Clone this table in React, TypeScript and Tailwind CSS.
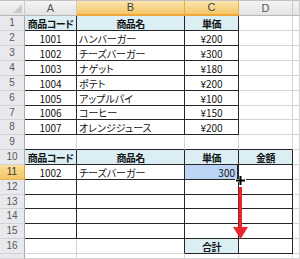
import React from "react";

type Cell = { t?: string; a?: "l" | "c" | "r"; b?: boolean; fill?: "h" | "s" };

const menu: [string, string, string][] = [
  ["1001", "ハンバーガー", "¥200"],
  ["1002", "チーズバーガー", "¥300"],
  ["1003", "ナゲット", "¥180"],
  ["1004", "ポテト", "¥200"],
  ["1005", "アップルパイ", "¥100"],
  ["1006", "コーヒー", "¥150"],
  ["1007", "オレンジジュース", "¥200"],
];

function rowCells(r: number): Cell[] {
  const empty: Cell[] = [{}, {}, {}, {}, {}];
  if (r === 1)
    return [
      { t: "商品コード", a: "c", b: true, fill: "h" },
      { t: "商品名", a: "c", b: true, fill: "h" },
      { t: "単価", a: "c", b: true, fill: "h" },
      {},
      {},
    ];
  if (r >= 2 && r <= 8) {
    const [code, name, price] = menu[r - 2];
    return [{ t: code, a: "c" }, { t: name, a: "l" }, { t: price, a: "c" }, {}, {}];
  }
  if (r === 10)
    return [
      { t: "商品コード", a: "c", b: true, fill: "h" },
      { t: "商品名", a: "c", b: true, fill: "h" },
      { t: "単価", a: "c", b: true, fill: "h" },
      { t: "金額", a: "c", b: true, fill: "h" },
      {},
    ];
  if (r === 11)
    return [
      { t: "1002", a: "c" },
      { t: "チーズバーガー", a: "l" },
      { t: "300", a: "r", fill: "s" },
      {},
      {},
    ];
  if (r === 16) return [{}, {}, { t: "合計", a: "c", b: true, fill: "h" }, {}, {}];
  return empty;
}

function rightDark(r: number, c: number) {
  if (r >= 1 && r <= 8) return c <= 2;
  if (r >= 10 && r <= 15) return c <= 3;
  if (r === 16) return c >= 1 && c <= 3;
  return false;
}

function bottomDark(r: number, c: number) {
  if (r >= 1 && r <= 8) return c <= 2;
  if (r >= 9 && r <= 15) return c <= 3;
  if (r === 16) return c >= 2 && c <= 3;
  return false;
}

const letters = ["A", "B", "C", "D", ""];
const highlightedCols = [1, 2];

function ColHeader({ label, idx }: { label: string; idx: number }) {
  const hot = highlightedCols.includes(idx);
  return (
    <div
      className={
        "flex items-end justify-center pb-[1px] border-t border-t-[#c2c2c2] border-r text-[11px] leading-none font-['Liberation_Sans',sans-serif] " +
        (hot
          ? "bg-gradient-to-b from-[#fbe4ae] to-[#f3c766] border-r-[#e0b050] border-b-2 border-b-[#f2a53a] text-[#444]"
          : "bg-gradient-to-b from-[#f4f4f4] to-[#e3e3e3] border-r-[#c9c9c9] border-b border-b-[#b8b8b8] text-[#555]")
      }
    >
      {label}
    </div>
  );
}

function RowHeader({ n }: { n: number }) {
  const hot = n === 11;
  return (
    <div
      className={
        "flex items-center justify-center border-r border-b text-[10px] leading-none font-['Liberation_Sans',sans-serif] " +
        (hot
          ? "bg-gradient-to-b from-[#fadd9a] to-[#f3c666] border-r-[#e89a2c] border-b-[#e3b45a] text-[#3a3a3a]"
          : "bg-[#e7e9ec] border-r-[#a9abae] border-b-[#d2d4d7] text-[#585858]")
      }
    >
      {n <= 16 ? n : ""}
    </div>
  );
}

function DataCell({ r, c, cell }: { r: number; c: number; cell: Cell }) {
  const rd = rightDark(r, c);
  const bd = bottomDark(r, c);
  const align =
    cell.a === "l" ? "justify-start pl-[2px]" : cell.a === "r" ? "justify-end pr-[2px]" : "justify-center";
  const bg =
    cell.fill === "h" ? "bg-[#daeef3]" : cell.fill === "s" ? "bg-[#bcd5f4]" : "bg-white";
  const sel = r === 11 && c === 2;
  return (
    <div
      className={
        "flex items-end pb-[1px] overflow-hidden whitespace-nowrap text-[10px] leading-none text-[#141414] font-['Noto_Sans_CJK_JP',sans-serif] [font-feature-settings:'palt'] border-b " +
        (sel ? "border-r-2 border-r-[#1e1e1e] " : "border-r ") +
        (rd ? "border-r-[#262626] " : "border-r-[#d4d4d4] ") +
        (bd ? "border-b-[#262626] " : "border-b-[#d4d4d4] ") +
        (cell.b ? "font-bold tracking-[-0.6px] " : "") +
        align +
        " " +
        bg
      }
    >
      {cell.t}
    </div>
  );
}

export default function App() {
  const rows = Array.from({ length: 17 }, (_, i) => i + 1);
  return (
    <div className="relative w-[300px] h-[259px] overflow-hidden bg-white">
      <div className="grid grid-cols-[25px_52px_108px_54px_54px_7px] grid-rows-[16px_15px_15px_15px_15px_15px_15px_14px_15px_15px_15px_15px_15px_14px_15px_15px_15px_5px]">
        {/* corner */}
        <div className="relative border-t border-t-[#c2c2c2] border-r border-r-[#c9c9c9] border-b border-b-[#b8b8b8] bg-gradient-to-b from-[#f4f4f4] to-[#e3e3e3]">
          <svg className="absolute right-[2px] bottom-[2px]" width="9" height="9" viewBox="0 0 9 9">
            <polygon points="9,0 9,9 0,9" fill="#c9c9c9" />
          </svg>
        </div>
        {letters.map((l, i) => (
          <ColHeader key={i} label={l} idx={i} />
        ))}
        {rows.map((r) => (
          <React.Fragment key={r}>
            <RowHeader n={r} />
            {rowCells(r).map((cell, c) => (
              <DataCell key={c} r={r} c={c} cell={cell} />
            ))}
          </React.Fragment>
        ))}
      </div>

      {/* fill-handle cursor */}
      <svg className="absolute left-[235px] top-[175px]" width="11" height="11" viewBox="0 0 11 11">
        <path d="M4 0h3v4h4v3H7v4H4V7H0V4h4z" fill="#fff" />
        <path d="M4.5 1h2v3.5H10v2H6.5V10h-2V6.5H1v-2h3.5z" fill="#000" />
      </svg>

      {/* drag direction arrow */}
      <svg className="absolute left-[232px] top-[187px]" width="17" height="53" viewBox="0 0 17 53">
        <rect x="6.5" y="0" width="3.5" height="41" fill="#e8262b" />
        <polygon points="1,40 16,40 8.5,52" fill="#e8262b" />
      </svg>
    </div>
  );
}
